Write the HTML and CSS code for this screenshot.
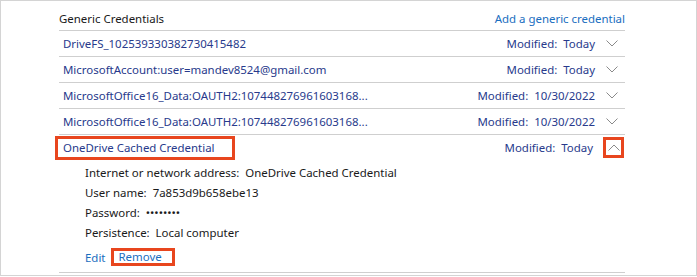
FILE: index.html
```html
<!DOCTYPE html>
<html>
<head>
<meta charset="utf-8">
<link rel="stylesheet" href="styles.css">
</head>
<body>
<div class="frame">
  <div class="panel">
    <div class="head">
      <span class="title">Generic Credentials</span>
      <span class="add">Add a generic credential</span>
    </div>
    <div class="row">
      <span class="name">DriveFS_102539330382730415482</span>
      <span class="mod">Modified:&nbsp; Today</span>
      <span class="chev"><svg width="12" height="7" viewBox="0 0 12 7"><polyline points="0.5,0.5 6,6 11.5,0.5" fill="none" stroke="#8a8a8a" stroke-width="1"/></svg></span>
    </div>
    <div class="row">
      <span class="name">MicrosoftAccount:user=mandev8524@gmail.com</span>
      <span class="mod">Modified:&nbsp; Today</span>
      <span class="chev"><svg width="12" height="7" viewBox="0 0 12 7"><polyline points="0.5,0.5 6,6 11.5,0.5" fill="none" stroke="#8a8a8a" stroke-width="1"/></svg></span>
    </div>
    <div class="row">
      <span class="name">MicrosoftOffice16_Data:OAUTH2:107448276961603168...</span>
      <span class="mod">Modified:&nbsp; 10/30/2022</span>
      <span class="chev"><svg width="12" height="7" viewBox="0 0 12 7"><polyline points="0.5,0.5 6,6 11.5,0.5" fill="none" stroke="#8a8a8a" stroke-width="1"/></svg></span>
    </div>
    <div class="row">
      <span class="name">MicrosoftOffice16_Data:OAUTH2:107448276961603168...</span>
      <span class="mod">Modified:&nbsp; 10/30/2022</span>
      <span class="chev"><svg width="12" height="7" viewBox="0 0 12 7"><polyline points="0.5,0.5 6,6 11.5,0.5" fill="none" stroke="#8a8a8a" stroke-width="1"/></svg></span>
    </div>
    <div class="expanded">
      <div class="row open">
        <span class="name"><span class="boxed">OneDrive Cached Credential</span></span>
        <span class="mod">Modified:&nbsp; Today</span>
        <span class="chev boxed-chev"><svg width="12" height="7" viewBox="0 0 12 7"><polyline points="0.5,6.5 6,1 11.5,6.5" fill="none" stroke="#8a8a8a" stroke-width="1"/></svg></span>
      </div>
      <div class="details">
        <div class="line">Internet or network address:&nbsp; OneDrive Cached Credential</div>
        <div class="line">User name:&nbsp; 7a853d9b658ebe13</div>
        <div class="line">Password:&nbsp; ••••••••</div>
        <div class="line">Persistence:&nbsp; Local computer</div>
        <div class="actions">
          <span class="link">Edit</span>
          <span class="link boxed-remove">Remove</span>
        </div>
      </div>
    </div>
  </div>
</div>
</body>
</html>
```
FILE: styles.css
```css
* { box-sizing: border-box; }
html, body { margin: 0; padding: 0; background: #fff; }
body { font-family: "Noto Sans", "Open Sans", sans-serif; font-size: 11.45px; }
.frame {
  width: 697px;
  height: 276px;
  border: 1px solid #d4d4d4;
  padding: 0 72px 0 58px;
}
.panel { width: 566px; }
.head {
  height: 30px;
  display: flex;
  align-items: flex-end;
  justify-content: space-between;
  padding-bottom: 4px;
  border-bottom: 1px solid #cfcfcf;
}
.title { color: #1a1a1a; }
.add { color: #1a6ec0; }
.row {
  height: 26px;
  display: flex;
  align-items: center;
  border-bottom: 1px solid #cfcfcf;
  padding-left: 4px;
}
.name { color: #283a8c; flex: 1; white-space: nowrap; }
.mod { color: #283a8c; }
.chev { width: 30px; display: flex; justify-content: center; align-items: center; padding-left: 4px; }
.expanded { border-bottom: 1px solid #cfcfcf; height: 138px; }
.row.open { border-bottom: none; height: 25px; }
.boxed {
  display: inline-block;
  line-height: 16px;
  outline: 3px solid #e8461e;
  padding: 1px 17px 1px 5px;
  margin-left: -5px;
}
.boxed-chev {
  width: 21px;
  height: 21px;
  margin: 0 1px 0 10px;
  padding: 0;
  outline: 3px solid #e8461e;
  outline-offset: -3px;
}
.details { padding-left: 26px; padding-top: 2px; color: #1a1a1a; }
.line { height: 20px; display: flex; align-items: center; }
.actions { display: flex; gap: 9px; height: 26px; align-items: center; padding-top: 4px; }
.link { color: #1a6ec0; }
.boxed-remove {
  display: inline-block;
  line-height: 12px;
  outline: 3px solid #e8461e;
  padding: 0 10px 0 4px;
}
```
